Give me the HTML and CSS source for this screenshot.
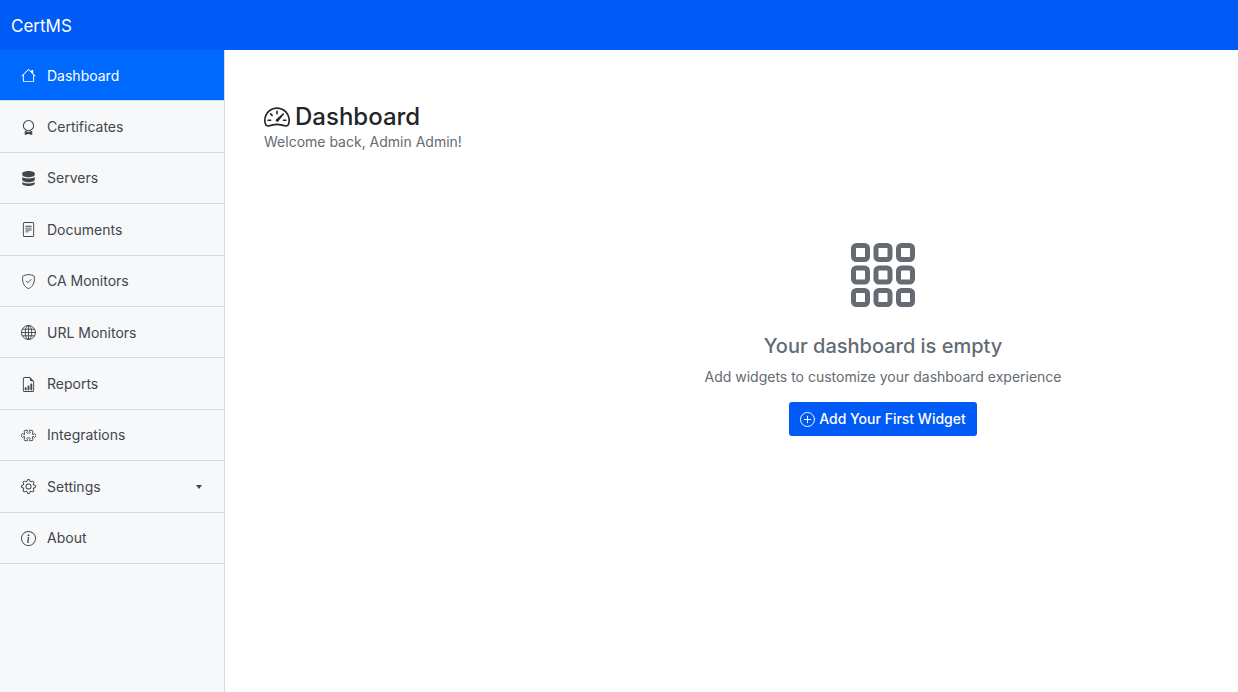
FILE: index.html
```html
<!DOCTYPE html>
<html lang="en">
<head>
    <meta charset="UTF-8">
    <meta name="viewport" content="width=device-width, initial-scale=1.0">
    <title>CertMS - Dashboard</title>
    <link rel="stylesheet" href="styles.css">
</head>
<body>
    <header class="navbar">
        <a class="brand" href="#">CertMS</a>
    </header>

    <div class="layout">
        <nav class="sidebar" aria-label="Main">
            <ul class="menu">
                <li>
                    <a class="menu-link active" href="#">
                        <svg class="icon" viewBox="0 0 16 16"><path d="M8.707 1.5a1 1 0 0 0-1.414 0L.646 8.146a.5.5 0 0 0 .708.708L2 8.207V13.5A1.5 1.5 0 0 0 3.5 15h9a1.5 1.5 0 0 0 1.5-1.5V8.207l.646.647a.5.5 0 0 0 .708-.708L13 5.793V2.5a.5.5 0 0 0-.5-.5h-1a.5.5 0 0 0-.5.5v1.293zM13 7.207V13.5a.5.5 0 0 1-.5.5h-9a.5.5 0 0 1-.5-.5V7.207l5-5z"/></svg>
                        <span>Dashboard</span>
                    </a>
                </li>
                <li>
                    <a class="menu-link" href="#">
                        <svg class="icon" viewBox="0 0 16 16"><path d="M8 0a6 6 0 1 0 0 12A6 6 0 1 0 8 0m0 1.100a4.900 4.900 0 1 1 0 9.800A4.900 4.900 0 1 1 8 1.100"/><path d="M4 11.794V16l4-1 4 1v-4.206l-2.018.306L8 13.126 6.018 12.1z"/></svg>
                        <span>Certificates</span>
                    </a>
                </li>
                <li>
                    <a class="menu-link" href="#">
                        <svg class="icon" viewBox="0 0 16 16"><path d="M1.333 2.667C1.333 1.194 4.318 0 8 0s6.667 1.194 6.667 2.667V4c0 1.473-2.985 2.667-6.667 2.667S1.333 5.473 1.333 4z"/><path d="M1.333 6.334v3C1.333 10.805 4.318 12 8 12s6.667-1.194 6.667-2.667V6.334a6.5 6.5 0 0 1-1.458.79C11.81 7.684 9.967 8 8 8s-3.809-.317-5.208-.876a6.5 6.5 0 0 1-1.458-.79z"/><path d="M14.667 11.668a6.5 6.5 0 0 1-1.458.789c-1.4.56-3.242.876-5.21.876-1.966 0-3.809-.316-5.208-.876a6.5 6.5 0 0 1-1.458-.79v1.666C1.333 14.806 4.318 16 8 16s6.667-1.194 6.667-2.667z"/></svg>
                        <span>Servers</span>
                    </a>
                </li>
                <li>
                    <a class="menu-link" href="#">
                        <svg class="icon" viewBox="0 0 16 16"><path d="M5 4a.5.5 0 0 0 0 1h6a.5.5 0 0 0 0-1zm-.5 2.5A.5.5 0 0 1 5 6h6a.5.5 0 0 1 0 1H5a.5.5 0 0 1-.5-.5M5 8a.5.5 0 0 0 0 1h6a.5.5 0 0 0 0-1zm0 2a.5.5 0 0 0 0 1h3a.5.5 0 0 0 0-1z"/><path d="M2 2a2 2 0 0 1 2-2h8a2 2 0 0 1 2 2v12a2 2 0 0 1-2 2H4a2 2 0 0 1-2-2zm10-1H4a1 1 0 0 0-1 1v12a1 1 0 0 0 1 1h8a1 1 0 0 0 1-1V2a1 1 0 0 0-1-1"/></svg>
                        <span>Documents</span>
                    </a>
                </li>
                <li>
                    <a class="menu-link" href="#">
                        <svg class="icon icon-line" viewBox="0 0 16 16"><path d="M8 .5c-1.2 0-3.6.8-5.5 1.35a1 1 0 0 0-.7.85C1.1 7.9 2.7 11.4 4.6 13.3 5.900 14.6 7.2 15.5 8 15.5s2.1-.9 3.4-2.2c1.9-1.9 3.5-5.4 2.8-10.6a1 1 0 0 0-.7-.85C11.6 1.3 9.2.5 8 .5z"/><path d="M5.500 7.500 7.500 9.300l3.200-3.500"/></svg>
                        <span>CA Monitors</span>
                    </a>
                </li>
                <li>
                    <a class="menu-link" href="#">
                        <svg class="icon icon-line" viewBox="0 0 16 16"><circle cx="8" cy="8" r="7.5"/><ellipse cx="8" cy="8" rx="3.5" ry="7.5"/><path d="M8 .5v15M.5 8h15M1.7 4.5h12.6M1.7 11.5h12.6"/></svg>
                        <span>URL Monitors</span>
                    </a>
                </li>
                <li>
                    <a class="menu-link" href="#">
                        <svg class="icon" viewBox="0 0 16 16"><path d="M10 13.5a.5.5 0 0 0 .5.5h1a.5.5 0 0 0 .5-.5v-6a.5.5 0 0 0-.5-.5h-1a.5.5 0 0 0-.5.5zm-2.5.5a.5.5 0 0 1-.5-.5v-4a.5.5 0 0 1 .5-.5h1a.5.5 0 0 1 .5.5v4a.5.5 0 0 1-.5.5zm-3 0a.5.5 0 0 1-.5-.5v-2a.5.5 0 0 1 .5-.5h1a.5.5 0 0 1 .5.5v2a.5.5 0 0 1-.5.5z"/><path d="M14 14V4.5L9.5 0H4a2 2 0 0 0-2 2v12a2 2 0 0 0 2 2h8a2 2 0 0 0 2-2M9.5 3A1.5 1.5 0 0 0 11 4.5h2V14a1 1 0 0 1-1 1H4a1 1 0 0 1-1-1V2a1 1 0 0 1 1-1h5.5z"/></svg>
                        <span>Reports</span>
                    </a>
                </li>
                <li>
                    <a class="menu-link" href="#">
                        <svg class="icon icon-line" viewBox="0 0 16 16"><path d="M3.7 6.5 3.4 3.300Q3.400 2.500 4.300 2.500H7V3.400C7 4 6 4.200 6 4.800 6 5.300 6.900 5.500 8 5.500s2-.2 2-.7C10 4.200 9 4 9 3.400V2.500h2.700q.9 0 .9.8L12.300 6.500V7h.6c.7 0 .9-1 1.600-1 .6 0 1 .9 1 2s-.4 2-1 2c-.7 0-.9-1-1.600-1h-.6v.5l.3 3.200q0 .8-.9.8H9v-.9c0-.6 1-.8 1-1.400 0-.5-.9-.7-2-.7s-2 .2-2 .7c0 .6 1 .8 1 1.400v.9H4.300q-.9 0-.9-.8L3.700 9.500V9h-.6c-.7 0-.9 1-1.600 1-.6 0-1-.9-1-2s.4-2 1-2c.7 0 .9 1 1.600 1h.6z"/></svg>
                        <span>Integrations</span>
                    </a>
                </li>
                <li>
                    <button class="menu-link" type="button" aria-expanded="false">
                        <svg class="icon" viewBox="0 0 16 16"><path d="M8 4.754a3.246 3.246 0 1 0 0 6.492 3.246 3.246 0 0 0 0-6.492M5.754 8a2.246 2.246 0 1 1 4.492 0 2.246 2.246 0 0 1-4.492 0"/><path d="M9.796 1.343c-.527-1.79-3.065-1.79-3.592 0l-.094.319a.873.873 0 0 1-1.255.52l-.292-.16c-1.64-.892-3.433.902-2.54 2.541l.159.292a.873.873 0 0 1-.52 1.255l-.319.094c-1.79.527-1.79 3.065 0 3.592l.319.094a.873.873 0 0 1 .52 1.255l-.16.292c-.892 1.64.901 3.434 2.541 2.54l.292-.159a.873.873 0 0 1 1.255.52l.094.319c.527 1.79 3.065 1.79 3.592 0l.094-.319a.873.873 0 0 1 1.255-.52l.292.16c1.64.893 3.434-.902 2.54-2.541l-.159-.292a.873.873 0 0 1 .52-1.255l.319-.094c1.79-.527 1.79-3.065 0-3.592l-.319-.094a.873.873 0 0 1-.52-1.255l.16-.292c.893-1.64-.902-3.433-2.541-2.54l-.292.159a.873.873 0 0 1-1.255-.52zm-2.633.283c.246-.835 1.428-.835 1.674 0l.094.319a1.873 1.873 0 0 0 2.693 1.115l.291-.16c.764-.415 1.6.42 1.184 1.185l-.159.292a1.873 1.873 0 0 0 1.116 2.692l.318.094c.835.246.835 1.428 0 1.674l-.319.094a1.873 1.873 0 0 0-1.115 2.693l.16.291c.415.764-.42 1.6-1.185 1.184l-.291-.159a1.873 1.873 0 0 0-2.693 1.116l-.094.318c-.246.835-1.428.835-1.674 0l-.094-.319a1.873 1.873 0 0 0-2.692-1.115l-.292.16c-.764.415-1.6-.42-1.184-1.185l.159-.291A1.873 1.873 0 0 0 1.945 8.93l-.319-.094c-.835-.246-.835-1.428 0-1.674l.319-.094A1.873 1.873 0 0 0 3.06 4.377l-.16-.292c-.415-.764.42-1.6 1.185-1.184l.292.159a1.873 1.873 0 0 0 2.692-1.115z"/></svg>
                        <span>Settings</span>
                        <svg class="caret" viewBox="0 0 6 4"><path d="M0 0h6L3 4z"/></svg>
                    </button>
                </li>
                <li>
                    <a class="menu-link" href="#">
                        <svg class="icon" viewBox="0 0 16 16"><path d="M8 15A7 7 0 1 1 8 1a7 7 0 0 1 0 14m0 1A8 8 0 1 0 8 0a8 8 0 0 0 0 16"/><path d="m8.93 6.588-2.29.287-.082.38.45.083c.294.07.352.176.288.469l-.738 3.468c-.194.897.105 1.319.808 1.319.545 0 1.178-.252 1.465-.598l.088-.416c-.2.176-.492.246-.686.246-.275 0-.375-.193-.304-.533zM9 4.5a1 1 0 1 1-2 0 1 1 0 0 1 2 0"/></svg>
                        <span>About</span>
                    </a>
                </li>
            </ul>
        </nav>

        <main class="content">
            <h1 class="page-title">
                <svg class="title-icon" viewBox="0 0 16 16"><path d="M8 4a.5.5 0 0 1 .5.5V6a.5.5 0 0 1-1 0V4.5A.5.5 0 0 1 8 4M3.732 5.732a.5.5 0 0 1 .707 0l.915.914a.5.5 0 1 1-.708.708l-.914-.915a.5.5 0 0 1 0-.707M2 10a.5.5 0 0 1 .5-.5h1.586a.5.5 0 0 1 0 1H2.5A.5.5 0 0 1 2 10m9.5 0a.5.5 0 0 1 .5-.5h1.5a.5.5 0 0 1 0 1H12a.5.5 0 0 1-.5-.5m.754-4.246a.39.39 0 0 0-.527-.02L7.547 9.31a.91.91 0 1 0 1.302 1.258l3.434-4.297a.39.39 0 0 0-.029-.518z"/><path d="M0 10a8 8 0 1 1 15.547 2.661c-.442 1.253-1.845 1.602-2.932 1.25C11.309 13.488 9.475 13 8 13c-1.474 0-3.31.488-4.615.911-1.087.352-2.49.003-2.932-1.25A8 8 0 0 1 0 10m8-7a7 7 0 0 0-6.603 9.329c.203.575.923.876 1.68.63C4.397 12.533 6.358 12 8 12s3.604.532 4.923.96c.757.245 1.477-.056 1.68-.631A7 7 0 0 0 8 3"/></svg>
                Dashboard
            </h1>
            <p class="welcome">Welcome back, Admin Admin!</p>

            <section class="empty-state">
                <svg class="empty-icon" viewBox="0 0 64 64">
                    <rect x="2.5" y="2.5" width="14" height="14" rx="3"/>
                    <rect x="25" y="2.5" width="14" height="14" rx="3"/>
                    <rect x="47.5" y="2.5" width="14" height="14" rx="3"/>
                    <rect x="2.5" y="25" width="14" height="14" rx="3"/>
                    <rect x="25" y="25" width="14" height="14" rx="3"/>
                    <rect x="47.5" y="25" width="14" height="14" rx="3"/>
                    <rect x="2.5" y="47.5" width="14" height="14" rx="3"/>
                    <rect x="25" y="47.5" width="14" height="14" rx="3"/>
                    <rect x="47.5" y="47.5" width="14" height="14" rx="3"/>
                </svg>
                <h2>Your dashboard is empty</h2>
                <p>Add widgets to customize your dashboard experience</p>
                <button class="btn" type="button">
                    <svg class="icon icon-line" viewBox="0 0 16 16"><circle cx="8" cy="8" r="7.5"/><path d="M8 4.5v7M4.5 8h7"/></svg>
                    Add Your First Widget
                </button>
            </section>
        </main>
    </div>
</body>
</html>
```
FILE: styles.css
```css
* {
    box-sizing: border-box;
}

body {
    margin: 0;
    min-height: 100vh;
    display: flex;
    flex-direction: column;
    font-family: Inter, "Liberation Sans", sans-serif;
    font-size: 14px;
    line-height: 20px;
    color: #212529;
    background-color: #fff;
}

svg {
    flex: none;
    fill: currentColor;
}

.navbar {
    display: flex;
    align-items: center;
    height: 50px;
    padding: 2px 11px 0;
    background-color: #005af5;
}

.brand {
    color: #fff;
    font-size: 17px;
    text-decoration: none;
}

.layout {
    flex: 1;
    display: flex;
}

/* Sidebar */
.sidebar {
    flex: none;
    width: 225px;
    background-color: #f7f8fa;
    border-right: 1px solid #d8dbdf;
}

.menu {
    display: grid;
    grid-auto-rows: 1fr;
    min-height: 514px;
    margin: 0;
    padding: 0;
    list-style: none;
}

.menu li {
    display: flex;
    border-bottom: 1px solid #d8dbdf;
}

.menu-link {
    flex: 1;
    display: flex;
    align-items: center;
    gap: 11px;
    padding: 1px 22px 0 21px;
    border: 0;
    background: none;
    font: inherit;
    color: #41464b;
    text-align: left;
    text-decoration: none;
    cursor: pointer;
}

.menu-link.active {
    color: #fff;
    background-color: #006aff;
}

.icon {
    width: 15px;
    height: 15px;
}

.icon-line {
    fill: none;
    stroke: currentColor;
    stroke-linecap: round;
    stroke-linejoin: round;
}

.caret {
    width: 6px;
    height: 4px;
    margin-left: auto;
}

/* Main content */
.content {
    flex: 1;
    min-width: 0;
    padding: 51px 39px;
    overflow: hidden;
}

.page-title {
    display: flex;
    align-items: center;
    gap: 5px;
    margin: 0;
    font-size: 24px;
    font-weight: 500;
    line-height: 31px;
}

.title-icon {
    width: 26px;
    height: 26px;
}

.welcome {
    margin: 0;
    color: #646b72;
}

/* Spans the full window width, so it sits right of the content's middle */
.empty-state {
    display: flex;
    flex-direction: column;
    align-items: center;
    width: 100vw;
    padding: 91px 0 48px;
    color: #646b72;
}

.empty-icon {
    width: 64px;
    height: 64px;
    fill: none;
    stroke: currentColor;
    stroke-width: 5;
}

.empty-state h2 {
    margin: 25px 0 7px;
    font-size: 20px;
    font-weight: 500;
    line-height: 28px;
}

.empty-state p {
    margin: 0 0 15px;
}

.btn {
    display: flex;
    align-items: center;
    gap: 4px;
    padding: 7px 11px;
    border: 0;
    border-radius: 3px;
    background-color: #005af5;
    color: #fff;
    font: inherit;
    font-weight: 500;
    cursor: pointer;
}
```
